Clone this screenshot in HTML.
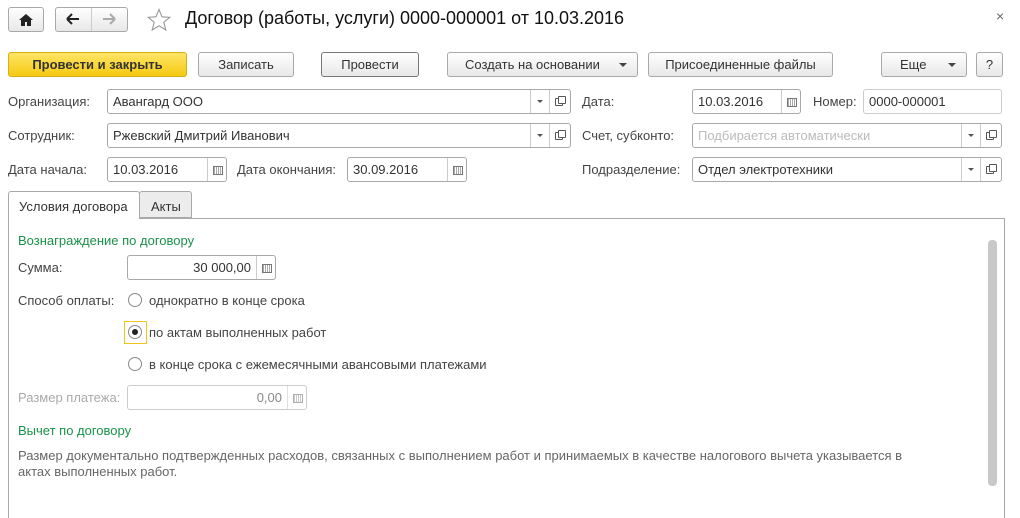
<!DOCTYPE html><html><head><meta charset="utf-8"><style>
*{box-sizing:border-box;margin:0;padding:0}
body{width:1020px;height:512px;background:#fff;font-family:"Liberation Sans",Arial,sans-serif;font-size:13px;color:#333;position:relative;overflow:hidden}
.a{position:absolute;white-space:nowrap}
.btn{position:absolute;border:1px solid #a9a9a9;border-radius:3px;background:linear-gradient(#fff,#e8e8e8);text-align:center;line-height:23px;height:25px;color:#333;font-size:13px}
.inp{position:absolute;border:1px solid #a9a9a9;border-radius:3px;height:25px;background:#fff;line-height:23px;padding-left:5px;color:#333}
.dd{position:absolute;top:0;bottom:0;width:19px;border-left:1px solid #ccc}
.dd:after{content:"";position:absolute;left:6px;top:10px;border:3px solid transparent;border-top:3px solid #555}
.op{position:absolute;top:0;bottom:0;width:21px;border-left:1px solid #ccc}
.op:before{content:"";position:absolute;left:5px;top:8px;width:6px;height:6px;border:1px solid #555;border-radius:1px}
.op:after{content:"";position:absolute;left:8px;top:6px;width:6px;height:6px;border:1px solid #555;background:#fff;border-radius:1px}
.cal{position:absolute;top:0;bottom:0;right:0;width:19px;border-left:1px solid #ccc}
.cal:after{content:"";position:absolute;left:5px;top:8px;width:8px;height:7px;border:1px solid #777;background:repeating-linear-gradient(90deg,#aaa 0 1px,#fff 1px 2px)}
.lbl{position:absolute;white-space:nowrap;color:#444}
.rad{position:absolute;width:14px;height:14px;border:1px solid #8a8a8a;border-radius:50%;background:#fff}
.grn{color:#1a9148}
</style></head><body>
<div class="btn" style="left:8px;top:7px;width:36px;height:25px"><svg width="14" height="12" style="margin-top:6px" viewBox="0 0 14 12"><path d="M7 0L0 6h2v6h4V8h2v4h4V6h2z" fill="#222"/></svg></div>
<div class="btn" style="left:55px;top:7px;width:73px;height:25px"></div>
<div class="a" style="left:91px;top:8px;width:1px;height:23px;background:#ccc"></div>
<svg class="a" style="left:66px;top:13px" width="14" height="12"><path d="M1 6h12M1 6l5-5M1 6l5 5" stroke="#222" stroke-width="2" fill="none"/></svg>
<svg class="a" style="left:102px;top:13px" width="14" height="12"><path d="M13 6H1M13 6L8 1M13 6l-5 5" stroke="#aaa" stroke-width="2" fill="none"/></svg>
<svg class="a" style="left:147px;top:8px" width="24" height="23"><path d="M12 1.5l3 7.3 7.8.5-6 5 2 7.7L12 17.8 5.2 22l2-7.7-6-5 7.8-.5z" fill="none" stroke="#999" stroke-width="1.1"/></svg>
<div class="a" style="left:185px;top:8px;font-size:18px;color:#111">Договор (работы, услуги) 0000-000001 от 10.03.2016</div>
<div class="a" style="left:996px;top:8px;font-size:14px;color:#666">×</div>

<div class="btn" style="left:8px;top:52px;width:179px;background:linear-gradient(#ffe566,#f5c912);border-color:#d6ae15;font-weight:bold;color:#333">Провести и закрыть</div>
<div class="btn" style="left:198px;top:52px;width:96px">Записать</div>
<div class="btn" style="left:321px;top:52px;width:98px;border-color:#777">Провести</div>
<div class="btn" style="left:447px;top:52px;width:191px;text-align:left;padding-left:17px">Создать на основании<span style="position:absolute;right:10px;top:10px;border:4px solid transparent;border-top:4px solid #444"></span></div>
<div class="btn" style="left:648px;top:52px;width:185px">Присоединенные файлы</div>
<div class="btn" style="left:881px;top:52px;width:86px;text-align:left;padding-left:18px">Еще<span style="position:absolute;right:10px;top:10px;border:4px solid transparent;border-top:4px solid #444"></span></div>
<div class="btn" style="left:976px;top:52px;width:27px">?</div>

<div class="lbl" style="left:8px;top:94px">Организация:</div>
<div class="inp" style="left:107px;top:89px;width:464px">Авангард ООО<div class="dd" style="right:21px"></div><div class="op" style="right:0"></div></div>
<div class="lbl" style="left:582px;top:94px">Дата:</div>
<div class="inp" style="left:692px;top:89px;width:109px">10.03.2016<div class="cal"></div></div>
<div class="lbl" style="left:813px;top:94px">Номер:</div>
<div class="inp" style="left:863px;top:89px;width:139px;border-color:#ccc">0000-000001</div>

<div class="lbl" style="left:8px;top:128px">Сотрудник:</div>
<div class="inp" style="left:107px;top:123px;width:464px">Ржевский Дмитрий Иванович<div class="dd" style="right:21px"></div><div class="op" style="right:0"></div></div>
<div class="lbl" style="left:582px;top:128px">Счет, субконто:</div>
<div class="inp" style="left:692px;top:123px;width:310px;color:#bbb">Подбирается автоматически<div class="dd" style="right:21px"></div><div class="op" style="right:0"></div></div>

<div class="lbl" style="left:8px;top:162px">Дата начала:</div>
<div class="inp" style="left:107px;top:157px;width:120px">10.03.2016<div class="cal"></div></div>
<div class="lbl" style="left:237px;top:162px">Дата окончания:</div>
<div class="inp" style="left:347px;top:157px;width:120px">30.09.2016<div class="cal"></div></div>
<div class="lbl" style="left:582px;top:162px">Подразделение:</div>
<div class="inp" style="left:692px;top:157px;width:310px">Отдел электротехники<div class="dd" style="right:21px"></div><div class="op" style="right:0"></div></div>

<div class="a" style="left:8px;top:218px;width:997px;height:300px;border:1px solid #a9a9a9;border-bottom:none"></div>
<div class="a" style="left:8px;top:191px;width:132px;height:28px;border:1px solid #a9a9a9;border-bottom:none;border-radius:3px 3px 0 0;background:#fff;padding:7px 0 0 10px;color:#333">Условия договора</div>
<div class="a" style="left:139px;top:191px;width:53px;height:27px;border:1px solid #a9a9a9;border-radius:3px 3px 0 0;background:#ececec;padding:7px 0 0 11px;color:#333">Акты</div>
<div class="a" style="left:988px;top:240px;width:9px;height:246px;background:#c8c8c8;border-radius:4px"></div>

<div class="a grn" style="left:18px;top:233px">Вознаграждение по договору</div>
<div class="lbl" style="left:18px;top:260px">Сумма:</div>
<div class="inp" style="left:127px;top:255px;width:149px;text-align:right;padding-right:24px">30 000,00<div class="cal"></div></div>
<div class="lbl" style="left:18px;top:293px">Способ оплаты:</div>
<div class="rad" style="left:128px;top:293px"></div><div class="lbl" style="left:149px;top:293px">однократно в конце срока</div>
<div class="a" style="left:124px;top:321px;width:23px;height:23px;border:1px solid #f0c419"></div>
<div class="rad" style="left:128px;top:325px"><div style="position:absolute;left:3px;top:3px;width:6px;height:6px;border-radius:50%;background:#222"></div></div>
<div class="lbl" style="left:149px;top:325px">по актам выполненных работ</div>
<div class="rad" style="left:128px;top:357px"></div><div class="lbl" style="left:149px;top:357px">в конце срока с ежемесячными авансовыми платежами</div>
<div class="lbl" style="left:18px;top:390px;color:#aaa">Размер платежа:</div>
<div class="inp" style="left:127px;top:385px;width:180px;text-align:right;padding-right:24px;border-color:#ccc;color:#888">0,00<div class="cal" style="opacity:.6"></div></div>
<div class="a grn" style="left:18px;top:423px">Вычет по договору</div>
<div class="lbl" style="left:18px;top:448px;color:#666;line-height:16px">Размер документально подтвержденных расходов, связанных с выполнением работ и принимаемых в качестве налогового вычета указывается в<br>актах выполненных работ.</div>
</body></html>
